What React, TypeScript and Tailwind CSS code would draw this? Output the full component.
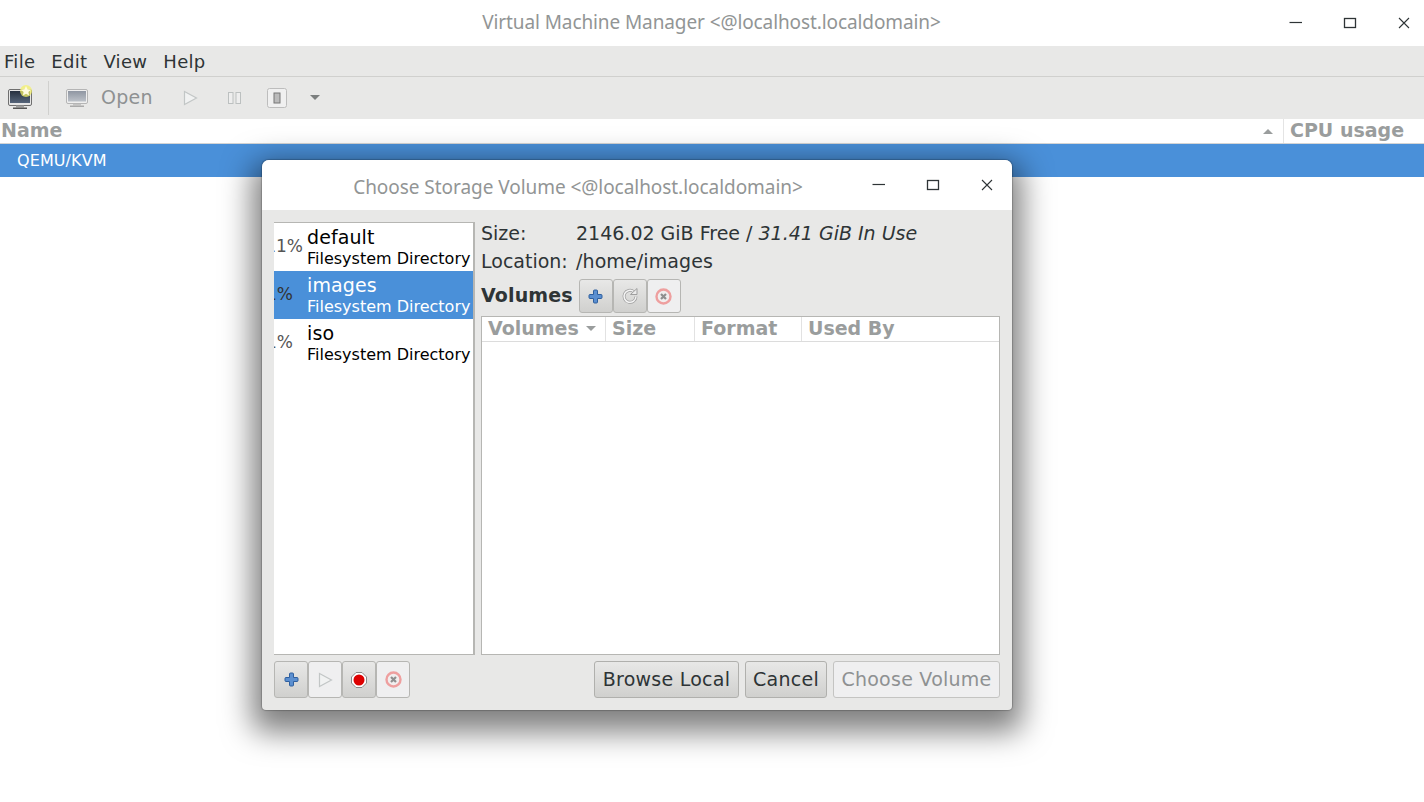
import React from "react";

const ui = "font-['DejaVu_Sans',sans-serif]";

function WindowControls({ gap }: { gap: string }) {
  return (
    <div className={`flex items-center ${gap}`}>
      <svg width="14" height="14" viewBox="0 0 14 14" className="text-[#2e3436]">
        <path d="M0.5 6.5h12.5" stroke="currentColor" strokeWidth="1.2" fill="none" />
      </svg>
      <svg width="14" height="14" viewBox="0 0 14 14" className="text-[#2e3436]">
        <rect x="1.5" y="2.5" width="11" height="9" stroke="currentColor" strokeWidth="1.3" fill="none" />
      </svg>
      <svg width="14" height="14" viewBox="0 0 14 14" className="text-[#2e3436]">
        <path d="M2 2l10 10M12 2L2 12" stroke="currentColor" strokeWidth="1.1" fill="none" />
      </svg>
    </div>
  );
}

function PlusIcon() {
  return (
    <svg width="15" height="15" viewBox="0 0 15 15">
      <path
        d="M5.500 2a1 1 0 0 1 1-1h2a1 1 0 0 1 1 1v3.500H13a1 1 0 0 1 1 1v2a1 1 0 0 1-1 1H9.500V13a1 1 0 0 1-1 1h-2a1 1 0 0 1-1-1V9.500H2a1 1 0 0 1-1-1v-2a1 1 0 0 1 1-1h3.500z"
        fill="#5b8fd0"
        stroke="#2f5f9e"
        strokeWidth="1"
      />
    </svg>
  );
}

function StopIcon() {
  return (
    <svg width="17" height="17" viewBox="0 0 17 17">
      <circle cx="8.500" cy="8.500" r="7" fill="#f1eeee" stroke="#ee9f9f" strokeWidth="2.400" />
      <path d="M6 6l5 5M11 6l-5 5" stroke="#8f8f8f" strokeWidth="2.200" />
    </svg>
  );
}

function RedDot() {
  return (
    <svg width="16" height="16" viewBox="0 0 16 16">
      <path d="M5 0.500h6L15.500 5v6L11 15.500H5L0.500 11V5z" fill="#fff" stroke="#8a8a8a" />
      <circle cx="8" cy="8" r="5.500" fill="#dd0000" />
    </svg>
  );
}

function PlayIcon() {
  return (
    <svg width="15" height="16" viewBox="0 0 15 16">
      <path d="M1.500 1.500L13.500 8 1.500 14.500z" fill="#f1f2f2" stroke="#c2c6c6" strokeWidth="1.200" />
    </svg>
  );
}

function RefreshIcon() {
  return (
    <svg width="18" height="18" viewBox="0 0 18 18">
      <path d="M15 9.500a6 6 0 1 1-2.200-4.800" fill="none" stroke="#9f9f9f" strokeWidth="3" />
      <path d="M15 9.500a6 6 0 1 1-2.200-4.800" fill="none" stroke="#f4f4f4" strokeWidth="1.500" />
      <path d="M9.500 7.500h6.500V1.500z" fill="#ececec" stroke="#9f9f9f" />
    </svg>
  );
}

function IconButton({ disabled, short, children }: { disabled?: boolean; short?: boolean; children: React.ReactNode }) {
  return (
    <button
      className={`flex ${short ? "h-[34px]" : "h-[37px]"} w-[34px] items-center justify-center rounded-[3px] border border-[#b6b6b3] ${
        disabled ? "bg-[#efeff0]" : "bg-gradient-to-b from-[#e8e8e7] to-[#d0d0ce]"
      }`}
    >
      {children}
    </button>
  );
}

function TextButton({ label, disabled, width }: { label: string; disabled?: boolean; width: string }) {
  return (
    <button
      className={`flex h-[37px] ${width} items-center justify-center rounded-[3px] border text-[19px] tracking-[0.25px] ${
        disabled
          ? "border-[#c4c4c2] bg-[#efeff0] text-[#8e9192]"
          : "border-[#b0b0ad] bg-gradient-to-b from-[#e8e8e7] to-[#d0d0ce] text-[#2e3436]"
      }`}
    >
      {label}
    </button>
  );
}

function Pool({ pct, name, selected, pctClass }: { pct: string; name: string; selected?: boolean; pctClass: string }) {
  return (
    <div className={`flex h-[48px] items-center overflow-hidden ${selected ? "bg-[#4a90d9] text-white" : "text-black"}`}>
      <div className={`mr-[4px] flex w-[29px] shrink-0 justify-end overflow-hidden text-[17px] ${pctClass}`}>
        <span className="whitespace-nowrap">{pct}</span>
      </div>
      <div className="flex flex-col pt-px">
        <span className="-translate-y-px text-[19px] leading-[22px] tracking-[0.1px]">{name}</span>
        <span className="text-[16px] leading-[20px] whitespace-nowrap">Filesystem Directory</span>
      </div>
    </div>
  );
}

function Dialog() {
  return (
    <div className="absolute top-[160px] left-[262px] flex h-[550px] w-[750px] flex-col rounded-t-[7px] rounded-b-[4px] bg-[#e8e8e7] shadow-[0_12px_30px_10px_rgba(0,0,0,0.5),0_0_1px_1px_rgba(0,0,0,0.2)]">
      <div className="flex h-[50px] shrink-0 items-center rounded-t-[7px] bg-white pr-[18px]">
        <div className="flex-1 pt-[5px] pl-[22px] text-center font-['Noto_Sans',sans-serif] text-[19px] tracking-[-0.05px] text-[#929595]">
          Choose Storage Volume &lt;@localhost.localdomain&gt;
        </div>
        <WindowControls gap="gap-[40px]" />
      </div>

      <div className="flex min-h-0 flex-1 flex-col px-[12px] pt-[12px] pb-[12px]">
        <div className="flex min-h-0 flex-1 gap-[6px]">
          <div className="w-[201px] shrink-0 border-y border-r-2 border-l-0 border-[#b6b6b3] bg-white">
            <Pool pct="11%" name="default" pctClass="text-[#555]" />
            <Pool pct="1%" name="images" selected pctClass="text-[#333] pr-[10px]" />
            <Pool pct="1%" name="iso" pctClass="text-[#555] pr-[10px]" />
          </div>

          <div className="flex min-w-0 flex-1 flex-col">
            <div className="-mt-[3px] grid grid-cols-[95px_1fr] text-[19px] leading-[28px] text-[#2e3436]">
              <span>Size:</span>
              <span>
                2146.02 GiB Free / <em>31.41 GiB In Use</em>
              </span>
              <span>Location:</span>
              <span className="tracking-[0.1px]">/home/images</span>
            </div>
            <div className="mt-[4px] flex items-center gap-[6px]">
              <span className="-translate-y-px text-[19px] font-bold tracking-[0.15px] text-[#2e3436]">Volumes</span>
              <div className="flex">
                <IconButton short><PlusIcon /></IconButton>
                <IconButton short><RefreshIcon /></IconButton>
                <IconButton short disabled><StopIcon /></IconButton>
              </div>
            </div>
            <div className="mt-[3px] min-h-0 flex-1 border border-[#b6b6b3] bg-white">
              <div className="flex h-[25px] items-center border-b border-[#dcdcdc] text-[19px] leading-none font-bold text-[#9a9d9d]">
                <div className="flex h-full w-[124px] items-center justify-between border-r border-[#e2e2e2] pr-[9px] pl-[6px]">
                  <span className="-translate-y-px">Volumes</span>
                  <svg width="10" height="6" viewBox="0 0 10 6"><path d="M0 0h10L5 5z" fill="#9a9d9d" /></svg>
                </div>
                <div className="flex h-full w-[89px] items-center border-r border-[#e2e2e2] pl-[6px]">
                  <span className="-translate-y-px">Size</span>
                </div>
                <div className="flex h-full w-[107px] items-center border-r border-[#e2e2e2] pl-[6px]">
                  <span className="-translate-y-px">Format</span>
                </div>
                <div className="flex h-full flex-1 items-center pl-[6px]">
                  <span className="-translate-y-px">Used By</span>
                </div>
              </div>
            </div>
          </div>
        </div>

        <div className="mt-[6px] flex items-center justify-between">
          <div className="flex">
            <IconButton><PlusIcon /></IconButton>
            <IconButton disabled><PlayIcon /></IconButton>
            <IconButton><RedDot /></IconButton>
            <IconButton disabled><StopIcon /></IconButton>
          </div>
          <div className="flex gap-[6px]">
            <TextButton label="Browse Local" width="w-[145px]" />
            <TextButton label="Cancel" width="w-[82px]" />
            <TextButton label="Choose Volume" disabled width="w-[167px]" />
          </div>
        </div>
      </div>
    </div>
  );
}

export default function App() {
  return (
    <div className={`relative h-[802px] w-[1424px] overflow-hidden bg-white ${ui}`}>
      {/* main window */}
      <div className="flex h-[46px] items-center pr-[13px]">
        <div className="flex-1 -translate-y-px pl-[134px] text-center font-['Noto_Sans',sans-serif] text-[19px] tracking-[-0.1px] text-[#929595]">
          Virtual Machine Manager &lt;@localhost.localdomain&gt;
        </div>
        <WindowControls gap="gap-[40px]" />
      </div>

      <div className="flex h-[31px] items-center gap-[16px] border-b border-[#d0d0ce] bg-[#e8e8e7] pl-[4px] text-[18px] tracking-[0.3px] text-[#2e3436]">
        <span>File</span>
        <span>Edit</span>
        <span>View</span>
        <span>Help</span>
      </div>

      <div className="flex h-[42px] items-center bg-[#e8e8e7] pl-[8px]">
        <svg width="26" height="26" viewBox="0 0 26 26">
          <defs>
            <linearGradient id="screen" x1="0" y1="0" x2="0" y2="1">
              <stop offset="0" stopColor="#27303f" />
              <stop offset="1" stopColor="#56657a" />
            </linearGradient>
          </defs>
          <rect x="0.500" y="4.500" width="23" height="16" rx="1.500" fill="#e6e6e6" stroke="#6f6f6f" />
          <rect x="2" y="6" width="20" height="12" fill="url(#screen)" />
          <rect x="8" y="20.500" width="8" height="2" fill="#a0a0a0" />
          <rect x="5" y="22.500" width="14" height="1.500" fill="#555" />
          <circle cx="18" cy="6" r="6" fill="#f4f16a" opacity="0.75" />
          <path d="M18 1l1.500 3.300 3.500.4-2.600 2.400.7 3.500-3.100-1.800-3.100 1.800.7-3.500L13 4.700l3.500-.4z" fill="#fffbe0" />
        </svg>
        <div className="mx-[14px] h-[34px] w-px bg-[#d0d0ce]" />
        <svg width="24" height="22" viewBox="0 0 24 22" className="ml-[2px]">
          <defs>
            <linearGradient id="dim" x1="0" y1="0" x2="0" y2="1">
              <stop offset="0" stopColor="#8f96a2" />
              <stop offset="1" stopColor="#bcc1c8" />
            </linearGradient>
          </defs>
          <rect x="1.500" y="2.500" width="21" height="14" rx="1.500" fill="#efefef" stroke="#b5b5b5" />
          <rect x="3" y="4" width="18" height="10.500" fill="url(#dim)" />
          <rect x="8" y="17" width="8" height="1.500" fill="#c4c4c4" />
          <rect x="5" y="18.500" width="14" height="1.500" fill="#aaa" />
        </svg>
        <span className="ml-[12px] -translate-y-px text-[19px] tracking-[0.3px] text-[#8e9192]">Open</span>
        <div className="ml-[30px]"><PlayIcon /></div>
        <svg width="14" height="14" viewBox="0 0 14 14" className="ml-[30px]">
          <rect x="0.500" y="1.500" width="4.500" height="11" fill="#eee" stroke="#bcc0c0" />
          <rect x="8" y="1.500" width="4.500" height="11" fill="#eee" stroke="#bcc0c0" />
        </svg>
        <svg width="20" height="20" viewBox="0 0 20 20" className="ml-[25px]">
          <rect x="0.500" y="0.500" width="19" height="19" rx="2" fill="#f0f0f0" stroke="#bdbdbd" />
          <rect x="7" y="5" width="6" height="10" fill="#bbb" stroke="#777" />
        </svg>
        <svg width="10" height="6" viewBox="0 0 10 6" className="ml-[23px]">
          <path d="M0 0h10L5 5z" fill="#7b7e7e" />
        </svg>
      </div>

      <div className="flex h-[25px] items-center border-b border-[#d4d4d4] text-[19px] leading-none font-bold text-[#9a9d9d]">
        <div className="flex h-full flex-1 items-center justify-between border-r border-[#e4e4e4] pr-[10px] pl-[1px]">
          <span className="-translate-y-px">Name</span>
          <svg width="10" height="6" viewBox="0 0 10 6"><path d="M0 6h10L5 1z" fill="#9a9d9d" /></svg>
        </div>
        <div className="flex h-full w-[140px] items-center pl-[6px]">
          <span className="-translate-y-px">CPU usage</span>
        </div>
      </div>

      <div className="flex h-[33px] items-center bg-[#4a90d9] pl-[17px] text-[16px] tracking-[0.1px] text-white">QEMU/KVM</div>

      <Dialog />
    </div>
  );
}
